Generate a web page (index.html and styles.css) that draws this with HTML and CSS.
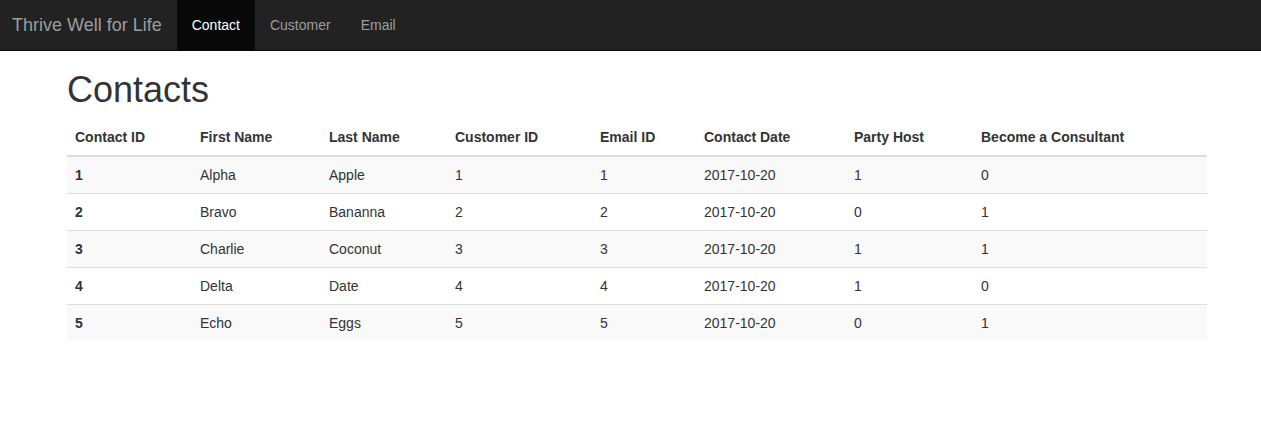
FILE: index.html
```html
<!DOCTYPE html>
<html lang="en">
<head>
<meta charset="utf-8">
<title>Contacts</title>
<link rel="stylesheet" href="styles.css">
</head>
<body>
<nav class="navbar">
  <a class="brand" href="#">Thrive Well for Life</a>
  <ul class="nav">
    <li><a class="nav-link active" href="#">Contact</a></li>
    <li><a class="nav-link" href="#">Customer</a></li>
    <li><a class="nav-link" href="#">Email</a></li>
  </ul>
</nav>
<div class="page">
<main class="container">
  <h1 class="title">Contacts</h1>
  <table class="table">
    <colgroup>
      <col class="col-id"><col class="col-first"><col class="col-last"><col class="col-customer"><col class="col-email"><col class="col-date"><col class="col-host"><col class="col-consultant">
    </colgroup>
    <thead>
      <tr><th scope="col">Contact ID</th><th scope="col">First Name</th><th scope="col">Last Name</th><th scope="col">Customer ID</th><th scope="col">Email ID</th><th scope="col">Contact Date</th><th scope="col">Party Host</th><th scope="col">Become a Consultant</th></tr>
    </thead>
    <tbody>
      <tr><th scope="row">1</th><td>Alpha</td><td>Apple</td><td>1</td><td>1</td><td>2017-10-20</td><td>1</td><td>0</td></tr>
      <tr><th scope="row">2</th><td>Bravo</td><td>Bananna</td><td>2</td><td>2</td><td>2017-10-20</td><td>0</td><td>1</td></tr>
      <tr><th scope="row">3</th><td>Charlie</td><td>Coconut</td><td>3</td><td>3</td><td>2017-10-20</td><td>1</td><td>1</td></tr>
      <tr><th scope="row">4</th><td>Delta</td><td>Date</td><td>4</td><td>4</td><td>2017-10-20</td><td>1</td><td>0</td></tr>
      <tr><th scope="row">5</th><td>Echo</td><td>Eggs</td><td>5</td><td>5</td><td>2017-10-20</td><td>0</td><td>1</td></tr>
    </tbody>
  </table>
</main>
</div>
</body>
</html>
```

FILE: styles.css
```css
* {
  box-sizing: border-box;
}

body {
  margin: 0;
  font-family: "Helvetica Neue", Helvetica, Arial, "Liberation Sans", sans-serif;
  font-size: 14px;
  line-height: 20px;
  color: #333;
  background: #fff;
}

.navbar {
  display: flex;
  background: #222;
  border-bottom: 1px solid #080808;
}

.brand {
  padding: 15px 15px 15px 12px;
  font-size: 18px;
  color: #9d9d9d;
  text-decoration: none;
}

.nav {
  display: flex;
  margin: 0;
  padding: 0;
  list-style: none;
}

.nav-link {
  display: block;
  padding: 15px;
  color: #9d9d9d;
  text-decoration: none;
}

.nav-link:hover,
.nav-link.active {
  color: #fff;
}

.nav-link.active {
  background: #080808;
}

.page {
  padding-left: 13px;
}

.container {
  max-width: 1170px;
  margin: 0 auto;
  padding: 0 15px;
}

.title {
  margin: 19px 0 9px;
  font-size: 36px;
  line-height: 40px;
  font-weight: 500;
}

.table {
  width: 100%;
  border-collapse: collapse;
}

.col-id { width: 125px; }
.col-first { width: 129px; }
.col-last { width: 126px; }
.col-customer { width: 145px; }
.col-email { width: 104px; }
.col-date { width: 150px; }
.col-host { width: 127px; }
.col-consultant { width: 234px; }

.table th,
.table td {
  padding: 8px;
  text-align: left;
  vertical-align: top;
  border-top: 1px solid #ddd;
}

.table thead th {
  border-top: 0;
  border-bottom: 2px solid #ddd;
}

.table tbody tr:nth-child(odd) {
  background: #f9f9f9;
}
```
